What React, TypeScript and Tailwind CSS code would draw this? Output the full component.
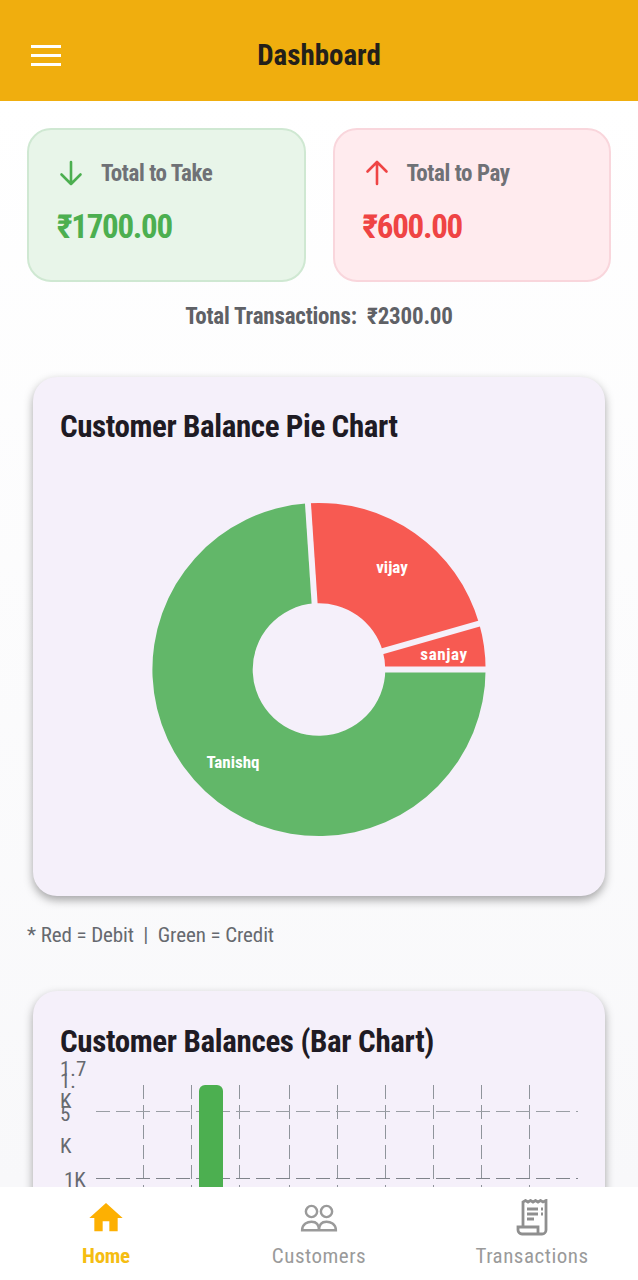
const font = { fontFamily: '"Liberation Sans Narrow", "Roboto Condensed", Roboto, sans-serif' };

function slice(r1: number, r2: number, a0: number, a1: number) {
  const p = (r: number, a: number) => {
    const t = (a * Math.PI) / 180;
    return `${(r * Math.cos(t)).toFixed(2)} ${(r * Math.sin(t)).toFixed(2)}`;
  };
  const large = a1 - a0 > 180 ? 1 : 0;
  return `M${p(r2, a0)} A${r2} ${r2} 0 ${large} 1 ${p(r2, a1)} L${p(r1, a1)} A${r1} ${r1} 0 ${large} 0 ${p(r1, a0)} Z`;
}

function Pie() {
  const gaps = [0, -16, -93.8];
  return (
    <svg width="340" height="340" viewBox="-170 -170.5 340 340" className="block">
      <path d={slice(66.3, 166.6, 0, 266.2)} fill="#62b769" />
      <path d={slice(66.3, 166.6, 266.2, 344)} fill="#f75a52" />
      <path d={slice(66.3, 166.6, 344, 360)} fill="#f75a52" />
      {gaps.map((a) => {
        const t = (a * Math.PI) / 180;
        return <line key={a} x1={60 * Math.cos(t)} y1={60 * Math.sin(t)} x2={172 * Math.cos(t)} y2={172 * Math.sin(t)} stroke="#f5f0fa" strokeWidth="6" />;
      })}
      <text x="73" y="-97" fill="#fff" fontSize="17" textAnchor="middle" fontWeight="700">vijay</text>
      <text x="125" y="-10" fill="#fff" fontSize="17" textAnchor="middle" fontWeight="700" letterSpacing="0.6">sanjay</text>
      <text x="-86" y="98" fill="#fff" fontSize="17" textAnchor="middle" fontWeight="700">Tanishq</text>
    </svg>
  );
}

function Bars() {
  const xs = [143.5, 191.5, 239.5, 289.5, 337.5, 385.5, 433.5, 481.5, 529.5];
  return (
    <svg width="572" height="130" viewBox="33 1057 572 130" className="block">
      {xs.map((x) => (
        <line key={x} x1={x} x2={x} y1="1085" y2="1187" stroke="#8f949b" strokeWidth="1" strokeDasharray="14 6" />
      ))}
      <line x1="96" x2="578" y1="1111.5" y2="1111.5" stroke="#9a9ea4" strokeWidth="1" strokeDasharray="14 6" />
      <line x1="96" x2="578" y1="1178.5" y2="1178.5" stroke="#7f838a" strokeWidth="1" strokeDasharray="14 6" />
      <path d="M199 1187 V1091 a6 6 0 0 1 6 -6 h12 a6 6 0 0 1 6 6 V1187 Z" fill="#4caf50" />
      <g fill="#66696f" fontSize="21">
        <text x="60" y="1076">1.7</text>
        <text x="60" y="1088">1.</text>
        <text x="60" y="1108">K</text>
        <text x="60" y="1121">5</text>
        <text x="60" y="1153">K</text>
        <text x="64" y="1187">1K</text>
      </g>
    </svg>
  );
}

function Stat({ label, value, arrow, tone }: { label: string; value: string; arrow: 'up' | 'down'; tone: 'green' | 'red' }) {
  const green = tone === 'green';
  const color = green ? '#4caf50' : '#ef4444';
  return (
    <div className={`h-[154px] rounded-[24px] border-2 pl-[28px] pt-[24px] ${green ? 'bg-[#e8f5e9] border-[#cfe8d2]' : 'bg-[#ffebee] border-[#f9d6dc]'}`}>
      <div className="flex items-center gap-[16px] h-[38px]">
        <svg width="28" height="28" viewBox="0 0 28 28" fill="none" stroke={color} strokeWidth="2.6" strokeLinecap="round" strokeLinejoin="round">
          {arrow === 'down' ? <path d="M14 3 V25 M4.5 15.5 L14 25 L23.5 15.5" /> : <path d="M14 25 V3 M4.5 12.5 L14 3 L23.5 12.5" />}
        </svg>
        <span className="text-[23px] font-bold text-[#6f7176] leading-none tracking-[-0.4px]">{label}</span>
      </div>
      <div className="mt-[13px] text-[33px] font-bold leading-[44px] tracking-[-1.3px]" style={{ color }}>{value}</div>
    </div>
  );
}

function NavItem({ label, active, children }: { label: string; active?: boolean; children: React.ReactNode }) {
  return (
    <div className="flex flex-col items-center w-[212px]">
      <div className="h-[44px] flex items-center justify-center">{children}</div>
      <span className={`mt-[1px] text-[21px] leading-[30px] ${active ? 'text-[#f5bd12] font-bold tracking-[-0.3px]' : 'text-[#9a9a9a] tracking-[0.5px]'}`}>{label}</span>
    </div>
  );
}

export default function App() {
  return (
    <div className="relative h-[1280px] w-[638px] overflow-hidden flex flex-col bg-white" style={font}>
      <header className="h-[101px] shrink-0 bg-[#f0ae0e] flex items-center relative pt-[9px]">
        <div className="ml-[31px] w-[30px] flex flex-col gap-[6px]">
          <div className="h-[3px] bg-white" />
          <div className="h-[3px] bg-white" />
          <div className="h-[3px] bg-white" />
        </div>
        <h1 className="absolute inset-x-0 text-center text-[29px] font-bold text-[#231f1a] leading-none">Dashboard</h1>
      </header>
      <main className="flex-1 min-h-0 overflow-hidden bg-gradient-to-b from-white to-[#f8f8fa]">
        <div className="px-[27px] pt-[27px] grid grid-cols-2 gap-[27px]">
          <Stat label="Total to Take" value="₹1700.00" arrow="down" tone="green" />
          <Stat label="Total to Pay" value="₹600.00" arrow="up" tone="red" />
        </div>
        <p className="mt-[19px] text-center text-[23px] font-bold text-[#5f6166] leading-[32px] tracking-[-0.2px]">Total Transactions:&nbsp; ₹2300.00</p>
        <section className="mx-[33px] mt-[44px] h-[519px] rounded-[24px] bg-[#f5f0fa] shadow-[0_4px_10px_rgba(0,0,0,0.35)] px-[27px] pt-[30px]">
          <h2 className="text-[31px] font-bold text-[#1f1b24] leading-[40px] tracking-[-0.4px]">Customer Balance Pie Chart</h2>
          <div className="mt-[52px] flex justify-center"><Pie /></div>
        </section>
        <p className="mt-[25px] px-[27px] text-[21px] text-[#66696f] leading-[28px] tracking-[-0.1px]">* Red = Debit&nbsp; |&nbsp; Green = Credit</p>
        <section className="mx-[33px] mt-[42px] h-[300px] rounded-[24px] bg-[#f5f0fa] shadow-[0_4px_10px_rgba(0,0,0,0.35)] relative overflow-hidden">
          <h2 className="absolute left-[27px] top-[31px] text-[31px] font-bold text-[#1f1b24] leading-[40px] tracking-[-0.35px]">Customer Balances (Bar Chart)</h2>
          <div className="pt-[66px]"><Bars /></div>
        </section>
      </main>
      <nav className="h-[93px] shrink-0 bg-white flex justify-between pt-[9px] z-10">
        <NavItem label="Home" active>
          <svg width="40" height="40" viewBox="0 0 24 24" fill="#fdb002"><path d="M10 20v-6h4v6h5v-8h3L12 3 2 12h3v8z" /></svg>
        </NavItem>
        <NavItem label="Customers">
          <svg width="38" height="30" viewBox="0 0 40 32" fill="none" stroke="#9a9a9a" strokeWidth="2.6" className="mt-[2px]">
            <circle cx="12" cy="8" r="6" /><circle cx="28" cy="8" r="6" />
            <path d="M2 28 C2 21 8 19 12 19 C16 19 20 21 20 28 Z M20 28 C20 21 24 19 28 19 C32 19 38 21 38 28 Z" />
          </svg>
        </NavItem>
        <NavItem label="Transactions">
          <svg width="32" height="38" viewBox="0 0 32 38" fill="none" stroke="#8f8f8f" strokeWidth="2.8">
            <path d="M7 27 V3 L9.5 1.5 L12 3 L14.5 1.5 L17 3 L19.5 1.5 L22 3 L24.5 1.5 L27 3 L30 1.5 V31 a4 4 0 0 1 -4 4 H6 a4 4 0 0 1 -4 -4 V28 H22 V35" />
            <path d="M11 10 H22 M11 15 H22 M11 20 H18 M25 10 H27 M25 15 H27" />
          </svg>
        </NavItem>
      </nav>
    </div>
  );
}
